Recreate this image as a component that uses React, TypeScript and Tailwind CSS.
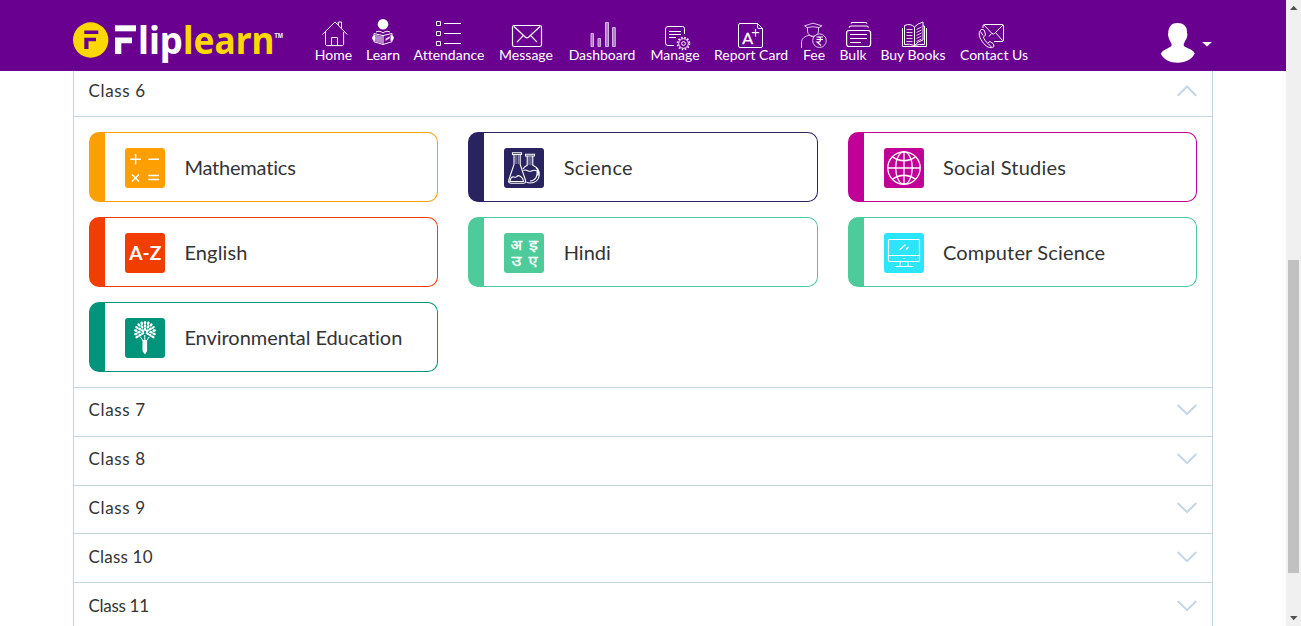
import React from "react";

type NavItem = { label: string; width: string; x: number; w: number; icon: React.ReactNode };

const nav: NavItem[] = [
  {
    label: "Home", width: "w-[37px]", x: 315, w: 37,
    icon: (
      <g>
        <path d="M322.3 34.6 335 21.9l12.2 12.6M325.5 32v12c0 1 .7 1.6 1.6 1.6h15c1 0 1.5-.6 1.5-1.6V32M338.3 25v-3h3.2v6" />
        <path d="M331.5 45.5v-8h6v8" />
      </g>
    ),
  },
  {
    label: "Learn", width: "w-[34px]", x: 366, w: 34,
    icon: (
      <g>
        <circle cx="383" cy="24.2" r="5.3" fill="#fff" stroke="none" />
        <path d="M374 33.5 383 35.6l9-2.1v8.2L383 44.5l-9-2.8z" fill="#6a008f" />
        <path d="M376 32c3-1.5 5-.5 7 1 2-1.5 4-2.5 7-1M383 35.6v8.9" />
        <path d="M375.5 35c-4.500 0-4.500 5.600 0 6zM390.500 35c4.500 0 4.500 5.600 0 6z" fill="#fff" stroke="none" />
        <path d="m385.500 38.800 4-2.500.5 1.800-4.500 3z" fill="#e8d5f0" stroke="none" />
        <path d="m375 34.500 7.500 2v7l-7.500-2.300z" fill="#b98acb" stroke="none" />
      </g>
    ),
  },
  {
    label: "Attendance", width: "w-[70px]", x: 414, w: 70,
    icon: (
      <path d="M436.500 21.500h4v4h-4zM436.500 31.500h4v4h-4zM436.500 41.500h4v4h-4zM444 23.500h17M444 33.500h17M444 43.500h17" />
    ),
  },
  {
    label: "Message", width: "w-[56px]", x: 498, w: 56,
    icon: (
      <g strokeWidth="1.2">
        <rect x="512.500" y="25.500" width="29" height="21" rx="1.800" />
        <path d="m514 26.500 11.500 10.800q1.500 1.300 3 0l11.500-10.800M517 42.200l6-6.400M537 42.200l-6-6.400" />
      </g>
    ),
  },
  {
    label: "Dashboard", width: "w-[68px]", x: 568, w: 68,
    icon: (
      <path
        fill="#b17cc7" stroke="#d3b5e0" strokeWidth="1"
        d="M591 33.500h2.500v13h-2.500zM598 38.500h2.500v8h-2.500zM605.500 22.500h3v24h-3zM612.500 27.500h2.800v19h-2.800z"
      />
    ),
  },
  {
    label: "Manage", width: "w-[50px]", x: 650, w: 50,
    icon: (
      <g>
        <path d="M674 45.500h-6q-2.500 0-2.500-2.500V29q0-2.500 2.500-2.500h14.500q2 0 2 2V34M669 31.500h12M669 34.500h12M669 37.500h7" />
        <circle cx="683.500" cy="43.500" r="4.800" />
        <circle cx="683.500" cy="43.500" r="1.900" />
        <circle cx="683.500" cy="43.500" r="6" strokeWidth="1.600" strokeDasharray="1.500 1.642" />
      </g>
    ),
  },
  {
    label: "Report Card", width: "w-[74px]", x: 714, w: 74,
    icon: (
      <g>
        <path d="M757.500 23.500H740q-1.500 0-1.500 1.500v21q0 1.500 1.500 1.500h21q1.500 0 1.500-1.500V28.500zM757.500 23.500v3.500q0 1.500 1.500 1.500h3.500" />
        <text x="742.300" y="43.900" fontSize="16" fontFamily="Lato, sans-serif" fill="#fff" stroke="#fff" strokeWidth=".3">A</text>
        <path d="M755.500 29v7.500M751.800 32.700h7.400" strokeWidth="1.200" />
      </g>
    ),
  },
  {
    label: "Fee", width: "w-[24px]", x: 802, w: 24,
    icon: (
      <g stroke="#dcc5e7">
        <path d="m804.500 25.800 8.500-2.600 9 2.600-3 1.700q-6-1.500-12 0zM807.500 27.500v3.500c0 7 11 7 11 0v-3.500M801.500 48v-5c0-5 3-6.500 8.500-8" />
        <path d="M810 35.500q3 3 6 0" />
        <circle cx="819.500" cy="40.700" r="6.800" fill="#6a008f" />
        <path d="M816.500 37h6.500M816.500 39.500h6.500M816.500 37h1.500c3.500 0 3.500 5 0 5h-1l4 3.500" strokeWidth="1.200" stroke="#fff" />
      </g>
    ),
  },
  {
    label: "Bulk", width: "w-[26px]", x: 840, w: 26,
    icon: (
      <g strokeWidth="1.200">
        <rect x="846.600" y="30.500" width="24" height="16" rx="2.500" />
        <path d="M849 27.500q.5-1.500 2-1.500h15.500q1.500 0 2 1.500M851 23.500q.5-1 1.500-1h13q1 0 1.500 1M850 34.500h17M850 38.500h17M850 42.500h11" />
      </g>
    ),
  },
  {
    label: "Buy Books", width: "w-[66px]", x: 880, w: 66,
    icon: (
      <g>
        <path d="M914.500 27v18.500q-5-2-10-1V25.500q6-2.500 10 1.500 3-3.500 8.500-5v18q-5.500 1.500-8.500 5.500M902.500 28v18.500h24V28M923 26h1.500v18.500q-5-.5-10 1" />
        <path d="M906.500 29.500h6M906.500 32.500h6M906.500 35.500h6M906.500 38.500h6M906.500 41.500h6M916.500 29.500l5-2.500M916.500 32.500l5-2.500M916.500 35.500l5-2.500M916.500 38.500l5-2.500M916.500 41.500l5-2.500" strokeWidth=".8" />
      </g>
    ),
  },
  {
    label: "Contact Us", width: "w-[68px]", x: 960, w: 68,
    icon: (
      <g>
        <path d="M983 28v-2q0-1.500 1.500-1.500h17.500q1.500 0 1.500 1.500v14q0 1.500-1.500 1.500h-8M984 25l8 8.500q1.300 1.200 2.600 0L1003 25M989 36.500l2.500-3M1002.500 40.500l-7-8" />
        <path d="M982 29.200c-4 2-3.500 7 0 12 4 6 8.500 8 12 5.300l-.500-2.500-3.500-2.500-2.500 1.500c-1.500-.8-4-4.500-4-6l2-2-1-4.500zM980.500 31.500l2.500 4M988 43.500l3.500 3.500" />
      </g>
    ),
  },
];

const TREE_LEAVES = Array.from({ length: 27 }, (_, i) => {
  const ring = i < 13 ? 0 : i < 22 ? 1 : 2;
  const n = [13, 9, 5][ring];
  const k = i - [0, 13, 22][ring];
  const r = [9.3, 6, 2.8][ring];
  const a = (-212 + (244 * k) / (n - 1)) * (Math.PI / 180);
  return { x: 20 + r * Math.cos(a), y: 14 + r * Math.sin(a), a: (a * 180) / Math.PI };
});

type Subject = { name: string; border: string; fill: string; track: string; icon: React.ReactNode };

const subjects: Subject[] = [
  {
    name: "Mathematics", border: "border-[#fb9f02]", fill: "bg-[#fb9f02]", track: "tracking-[-0.2px]",
    icon: <path strokeWidth="1.500" d="M5.300 11.300h10.500M10.600 6v10.500M23.300 11.300h10.700M7 26.500l7 7M14 26.500l-7 7M23.300 27.500h10.700M23.300 31.500h10.700" />,
  },
  {
    name: "Science", border: "border-[#292460]", fill: "bg-[#292460]", track: "tracking-[0.36px]",
    icon: (
      <g strokeWidth="1.100">
        <path d="M8.500 4.800h9v1.700h-9zM10 6.500v10L4.800 32q-.8 3 2 3.300h13q2.500-.3 1.600-3.300L16.200 16.500v-10M6.800 30.500c2-4 4 .5 6-2 2-2 4 0 5.800 2l1 3H6z" />
        <path d="M21.500 6.300h9v1.700h-9zM23.200 8v9.300q-3 1.200-4.200 3.700M28.800 8v9.300c10 4.500 8 17.500-2.800 17.700q-2 0-3.500-.7M19.500 22.500c3-2 5 2 8 .5 2-1 3.500-1 5.500 0 1 5-1.500 9.500-7 10M32 19.500q3 3 2 8" />
        <path d="M12 7v9M14.300 7v9M25 9v8M27 9v8" stroke="#a3a0bd" strokeWidth="1" />
      </g>
    ),
  },
  {
    name: "Social Studies", border: "border-[#c10097]", fill: "bg-[#c10097]", track: "tracking-[0.2px]",
    icon: (
      <g strokeWidth="1.300">
        <circle cx="20" cy="20" r="16.200" />
        <ellipse cx="20" cy="20" rx="8.300" ry="16.200" />
        <path d="M20 4v32M4 20h32M8.500 9q11.500 7.500 23 0M8.500 31q11.500-7.500 23 0" />
      </g>
    ),
  },
  {
    name: "English", border: "border-[#f23d00]", fill: "bg-[#f23d00]", track: "tracking-[0.15px]",
    icon: <text x="4.300" y="27" fontSize="19.500" fontWeight="700" fontFamily="Lato, sans-serif" fill="#fff" stroke="none" textLength="32" lengthAdjust="spacingAndGlyphs">A-Z</text>,
  },
  {
    name: "Hindi", border: "border-[#4dcb9b]", fill: "bg-[#4dcb9b]", track: "tracking-[0px]",
    icon: (
      <g fill="#fff" stroke="#fff" strokeWidth=".3" fontSize="14" fontFamily="'Noto Sans', sans-serif">
        <text x="6.500" y="17" textLength="11.500" lengthAdjust="spacingAndGlyphs">अ</text>
        <text x="25" y="17" textLength="9" lengthAdjust="spacingAndGlyphs">इ</text>
        <text x="7.500" y="33" textLength="10" lengthAdjust="spacingAndGlyphs">उ</text>
        <text x="24.500" y="33" textLength="9" lengthAdjust="spacingAndGlyphs">ए</text>
      </g>
    ),
  },
  {
    name: "Computer Science", border: "border-[#4dcb9b]", fill: "bg-[#2de5f9]", track: "tracking-[0.15px]",
    icon: (
      <g strokeWidth="1.200">
        <rect x="4.500" y="6.500" width="31" height="22" rx="1" />
        <path d="M4.500 22.500h31M16.500 28.500l-.8 4.500M23.500 28.500l.8 4.500M10.500 33.500h19M15.500 17l6-5.500M22 16.500l2.500-2.500M19.300 25.500h1.400" />
      </g>
    ),
  },
  {
    name: "Environmental Education", border: "border-[#00947b]", fill: "bg-[#00947b]", track: "tracking-[-0.05px]",
    icon: (
      <g fill="#fff" stroke="none">
        {TREE_LEAVES.map((l, i) => (
          <ellipse key={i} cx={l.x} cy={l.y} rx="1.800" ry="1.250" transform={`rotate(${l.a} ${l.x} ${l.y})`} />
        ))}
        <path d="M17.500 22h4.600v11L20 36.500 17.500 33z" />
        <path d="M18.300 23l-2.800-4M21.300 23l2.800-4M19.800 22v-5" stroke="#fff" strokeWidth="1" />
      </g>
    ),
  },
];

const classes = [
  { name: "Class 7", track: "tracking-[0.65px]", row: "h-[49px] pt-[11px]" },
  { name: "Class 8", track: "tracking-[0.65px]", row: "h-[49px] pt-[11px]" },
  { name: "Class 9", track: "tracking-[0.65px]", row: "h-[48px] pt-[11px]" },
  { name: "Class 10", track: "tracking-[0.2px]", row: "h-[49px] pt-[12px]" },
  { name: "Class 11", track: "tracking-[-0.3px]", row: "h-[49px] pt-[12px]" },
];

function Logo() {
  return (
    <svg viewBox="73 18 212 46" className="h-[46px] w-[212px] shrink-0 overflow-visible" fontFamily="'Noto Sans', sans-serif" fontWeight="700">
      <circle cx="90.700" cy="40" r="17.700" fill="#fcd800" />
      <g fill="#6a008f">
        <rect x="84.300" y="30.500" width="14" height="3.500" />
        <path d="M84.300 37.800h11.700v3.500h-7.500V49h-4.200z" />
      </g>
      <g fill="#fff">
        <rect x="115" y="25.300" width="21" height="6" />
        <path d="M115 37.500h17v5.800h-10.700V54H115z" />
        <text x="138" y="54" fontSize="37.500" textLength="45" lengthAdjust="spacingAndGlyphs">lip</text>
        <text x="274.500" y="38" fontSize="7" textLength="8.500" lengthAdjust="spacingAndGlyphs">TM</text>
      </g>
      <text x="183" y="54" fontSize="37.500" fill="#fcd800" textLength="91.300" lengthAdjust="spacingAndGlyphs">learn</text>
    </svg>
  );
}

function Chevron({ up = false }: { up?: boolean }) {
  return (
    <svg viewBox="0 0 20 12" className="h-3 w-5" fill="none" stroke="#c4d6e6" strokeWidth="2">
      <path d={up ? "M.7 10.700 10 1.500l9.300 9.200" : "M.7 1 10 10.200 19.300 1"} />
    </svg>
  );
}

export default function App() {
  return (
    <div className="flex h-[626px] w-[1301px] overflow-hidden bg-white font-['Lato',sans-serif] text-[#333] [font-variant-ligatures:none]">
      <div className="flex w-[1286px] flex-col">
        <header className="flex h-[71px] shrink-0 items-start bg-[#6a008f] pl-[73px] text-white">
          <div className="w-[242px] pt-[18px]"><Logo /></div>
          <nav className="flex gap-[14px] pt-[18px]">
            {nav.map((n) => (
              <a key={n.label} className={`flex flex-col ${n.width}`}>
                <svg viewBox={`${n.x} 18 ${n.w} 28`} className={`h-[28px] overflow-visible ${n.width}`} fill="none" stroke="#fff">
                  {n.icon}
                </svg>
                <span className="self-center whitespace-nowrap text-[14px] leading-[18px]">{n.label}</span>
              </a>
            ))}
          </nav>
          <div className="ml-[133px] flex pt-[22px]">
            <svg viewBox="1161 22 52 42" className="h-[42px] w-[52px]" fill="#fff">
              <path d="M1170.500 26q1.500-3 7-3t7.500 3q2.500 2 2 7 .8 1.500 0 4-.500 2.500-2 4-.7 2-1.200 2.500v2.500q4 2.500 7 3.500 3 1.500 4 4c-3 6-9 9.200-17 9.200s-14.500-3.500-17-9.200q1.500-2.500 4.500-4 3-1.500 6.200-3.500V43.500q-.8-1-1.500-2.500-1-1.500-1.500-4-.9-2.500-.2-4-.500-4.500 2.200-7z" />
              <path d="M1202 42h10l-5 4.500z" />
            </svg>
          </div>
        </header>
        <main className="ml-[73px] flex w-[1140px] flex-1 flex-col overflow-hidden border-x border-[#c4d5e2]">
          <div className="flex h-[46px] shrink-0 items-start justify-between border-b border-[#c4d5e2] pl-[14.500px] pr-[15px] pt-[9px]">
            <h2 className="text-[17px] leading-[22px] tracking-[0.65px]">Class 6</h2>
            <div className="pt-[5px]"><Chevron up /></div>
          </div>
          <div className="grid shrink-0 grid-cols-3 gap-x-[30px] gap-y-[15px] p-[15px]">
            {subjects.map((s) => (
              <div key={s.name} className={`flex h-[70px] items-start rounded-[10px] border border-l-[16px] pl-5 pt-[15px] ${s.border}`}>
                <div className={`mr-[19.400px] size-10 shrink-0 rounded-[3px] ${s.fill}`}>
                  <svg viewBox="0 0 40 40" className="size-10" fill="none" stroke="#fff">{s.icon}</svg>
                </div>
                <span className={`whitespace-nowrap pt-[7px] text-[20px] leading-6 ${s.track}`}>{s.name}</span>
              </div>
            ))}
          </div>
          {classes.map((c) => (
            <div key={c.name} className={`flex shrink-0 items-start justify-between border-t border-[#c4d5e2] pl-[14.500px] pr-[15px] ${c.row}`}>
              <h2 className={`text-[17px] leading-[22px] ${c.track}`}>{c.name}</h2>
              <div className="pt-[5px]"><Chevron /></div>
            </div>
          ))}
        </main>
      </div>
      <div className="flex w-[15px] flex-col items-center bg-[#f0f0f0]">
        <svg viewBox="0 0 15 15" className="size-[15px]" fill="#505050"><path d="M4 10h7.500L7.700 5.700z" /></svg>
        <div className="mt-[245px] h-[313px] w-[11px] bg-[#c1c1c1]" />
        <svg viewBox="0 0 15 15" className="mt-[38px] size-[15px]" fill="#505050"><path d="M4 5h7.500L7.700 9.300z" /></svg>
      </div>
    </div>
  );
}
